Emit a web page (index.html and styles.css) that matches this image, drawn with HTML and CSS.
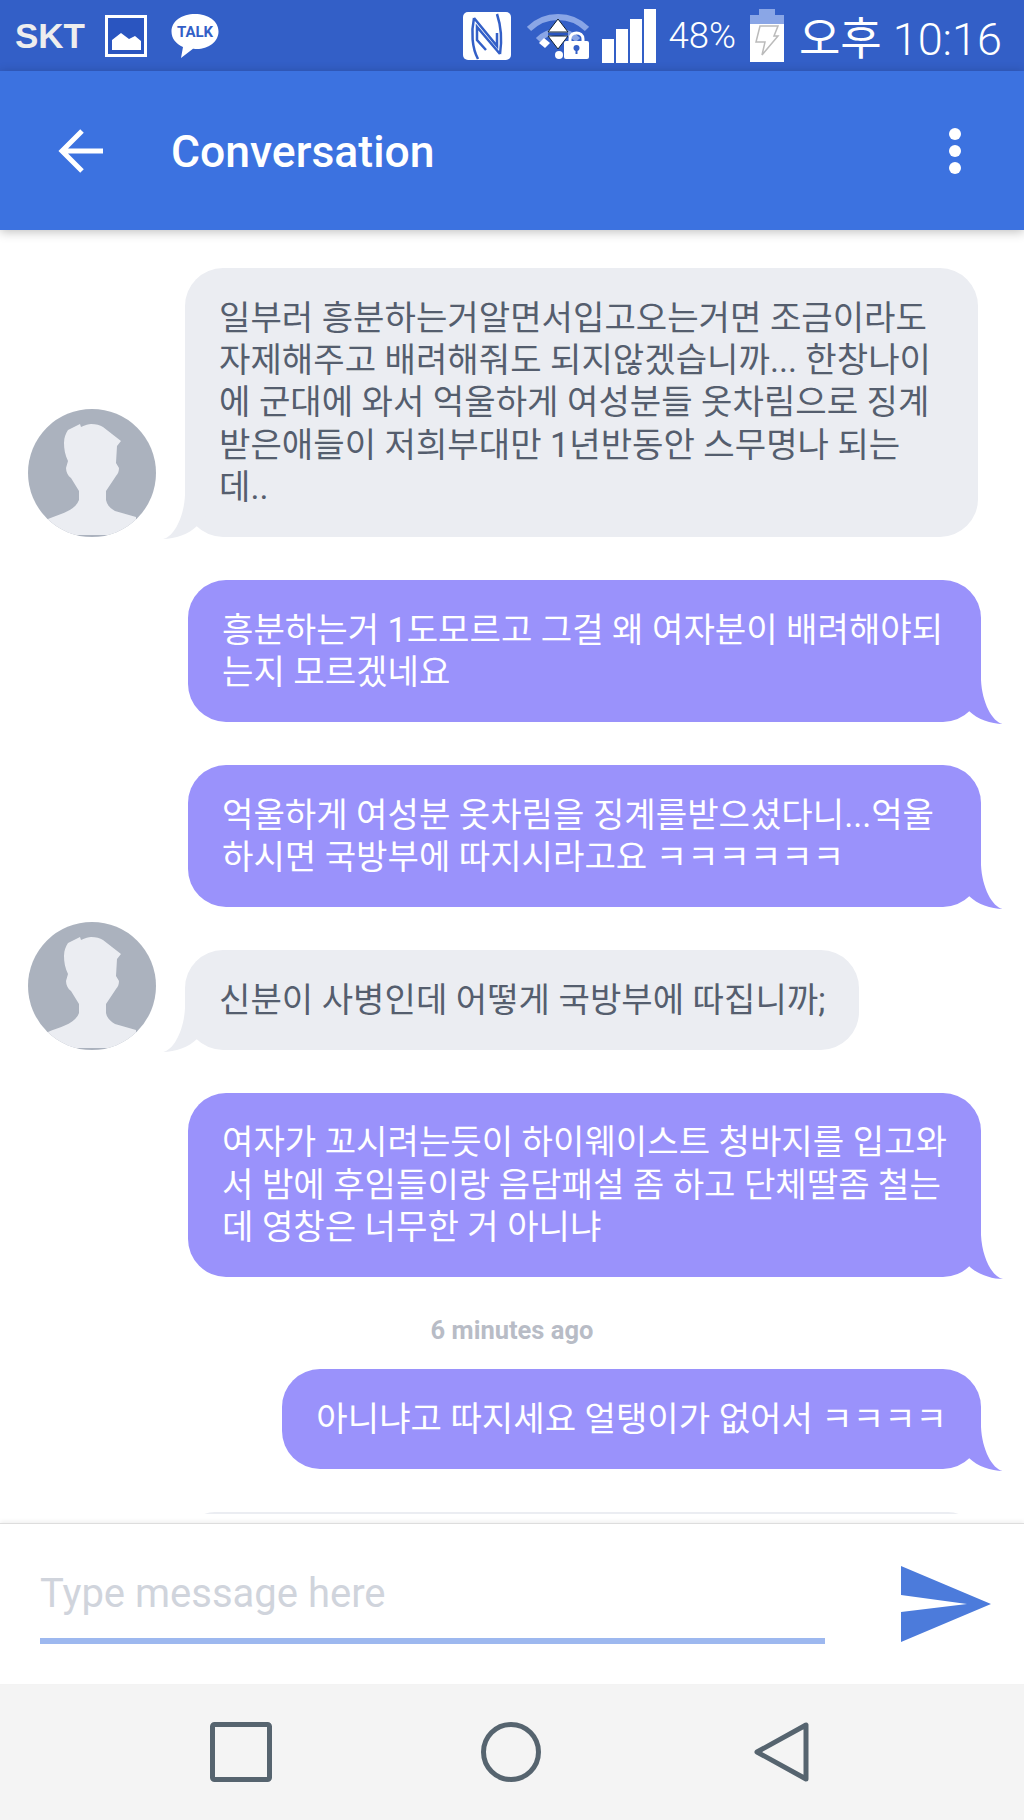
FILE: index.html
```html
<!DOCTYPE html>
<html lang="ko">
<head>
    <meta charset="utf-8">
    <title>Conversation</title>
    <link rel="stylesheet" href="styles.css">
</head>
<body>
    <div class="status">
        <span class="carrier">SKT</span>
        <svg class="ic-photo" width="42" height="42" viewBox="0 0 42 42"><path fill="#fff" d="M0 0h42v42H0z"/><path fill="#2a55c0" d="M3 3h36v36H3z"/><path fill="#fff" d="M7 35V25l9-7 8 6 6-3 6 5v9z"/></svg>
        <svg class="ic-talk" width="48" height="44" viewBox="0 0 48 44"><path fill="#fff" d="M24 0c13 0 23.500 7 23.500 17.500S37 35 26 35c-1 0-3 0-4-.200L10 44l2-11C5 30 .5 24.500.5 17.500.5 7 11 0 24 0z"/><text class="talk-text" x="24" y="23" text-anchor="middle">TALK</text></svg>
        <span class="status-fill"></span>
        <svg class="ic-nfc" width="48" height="48" viewBox="0 0 48 48"><rect width="48" height="48" rx="5" fill="#fff"/><path fill="none" stroke="#335fc7" stroke-width="2.500" d="M11 6C8 20 9 36 15 47M11 6l23 28V21M37 42c2-13 1-28-3-40M37 42L14 15v13l9 10"/></svg>
        <svg class="ic-wifi" width="62" height="47" viewBox="0 0 62 47"><path fill="none" stroke="#8aa6e6" stroke-width="6" d="M2 17C18 1 44 1 60 17M11 28c11-11 29-11 40 0"/><path fill="#fff" stroke="#123" stroke-width="1" d="M31 7l10 13H21zM21 24h20L31 37z"/><path fill="#2a55c0" d="M21 21h20v2H21z"/><circle cx="32" cy="43" r="4" fill="#fff"/><path fill="#fff" d="M17 26l6 5-5 5-6-5z"/><rect x="37" y="29" width="25" height="18" rx="2" fill="#fff"/><path fill="none" stroke="#fff" stroke-width="3" d="M43 30v-3c0-8 13-8 13 0v3"/><circle cx="49.500" cy="36" r="3" fill="#335fc7"/><path fill="#335fc7" d="M48.500 36h2v6h-2z"/></svg>
        <svg class="ic-signal" width="54" height="54" viewBox="0 0 54 54"><path fill="#fff" d="M0 30h12v24H0zM14 20h12v34H14zM28 10h12v44H28zM42 0h12v54H42z"/></svg>
        <span class="pct">48%</span>
        <svg class="ic-batt" width="34" height="53" viewBox="0 0 34 53"><path fill="#8aa6e6" d="M9 0h16v6h9v9H0V6h9z"/><path fill="#fff" d="M0 15h34v38H0z"/><path fill="#fff" stroke="#bbb" stroke-width="1.500" d="M10 17h18l-4 10h4L12 46l3-13H6z"/></svg>
        <span class="clock"><span class="ampm">오후</span> 10:16</span>
    </div>

    <div class="appbar">
        <svg class="back" width="46" height="46" viewBox="0 0 46 46"><path fill="none" stroke="#fff" stroke-width="5" d="M46 23H5M25 3L5 23l20 20"/></svg>
        <span class="title">Conversation</span>
        <div class="more"><i></i><i></i><i></i></div>
    </div>

    <div class="messages">
        <div class="row in">
            <svg class="avatar" width="128" height="128" viewBox="0 0 128 128"><use href="#person"/></svg>
            <div class="bubble in-bubble wide">
                일부러 흥분하는거알면서입고오는거면 조금이라도<br>자제해주고 배려해줘도 되지않겠습니까... 한창나이<br>에 군대에 와서 억울하게 여성분들 옷차림으로 징계<br>받은애들이 저희부대만 1년반동안 스무명나 되는<br>데..
                <svg class="tail tail-in" width="44" height="44" viewBox="0 0 44 44"><path d="M22 0C21 22 11 42 0 44c12 0 26-5 34-13l10-11V0z"/></svg>
            </div>
        </div>

        <div class="row out">
            <div class="bubble out-bubble wide">
                흥분하는거 1도모르고 그걸 왜 여자분이 배려해야되<br>는지 모르겠네요
                <svg class="tail tail-out" width="44" height="44" viewBox="0 0 44 44"><path d="M22 0c1 22 11 42 22 44-12 0-26-5-34-13L0 20V0z"/></svg>
            </div>
        </div>

        <div class="row out">
            <div class="bubble out-bubble wide">
                억울하게 여성분 옷차림을 징계를받으셨다니...억울<br>하시면 국방부에 따지시라고요 ㅋㅋㅋㅋㅋㅋ
                <svg class="tail tail-out" width="44" height="44" viewBox="0 0 44 44"><path d="M22 0c1 22 11 42 22 44-12 0-26-5-34-13L0 20V0z"/></svg>
            </div>
        </div>

        <div class="row in">
            <svg class="avatar" width="128" height="128" viewBox="0 0 128 128"><use href="#person"/></svg>
            <div class="bubble in-bubble">
                신분이 사병인데 어떻게 국방부에 따집니까;
                <svg class="tail tail-in" width="44" height="44" viewBox="0 0 44 44"><path d="M22 0C21 22 11 42 0 44c12 0 26-5 34-13l10-11V0z"/></svg>
            </div>
        </div>

        <div class="row out">
            <div class="bubble out-bubble wide">
                여자가 꼬시려는듯이 하이웨이스트 청바지를 입고와<br>서 밤에 후임들이랑 음담패설 좀 하고 단체딸좀 철는<br>데 영창은 너무한 거 아니냐
                <svg class="tail tail-out" width="44" height="44" viewBox="0 0 44 44"><path d="M22 0c1 22 11 42 22 44-12 0-26-5-34-13L0 20V0z"/></svg>
            </div>
        </div>

        <div class="stamp">6 minutes ago</div>

        <div class="row out">
            <div class="bubble out-bubble">
                아니냐고 따지세요 얼탱이가 없어서 ㅋㅋㅋㅋ
                <svg class="tail tail-out" width="44" height="44" viewBox="0 0 44 44"><path d="M22 0c1 22 11 42 22 44-12 0-26-5-34-13L0 20V0z"/></svg>
            </div>
        </div>

        <div class="row in">
            <div class="bubble in-bubble cut"></div>
        </div>
    </div>

    <div class="composer">
        <div class="field">Type message here</div>
        <svg class="send" width="90" height="76" viewBox="0 0 90 76"><path fill="#4c7bdb" d="M0 0l90 38L0 76V46l66-8-66-9z"/></svg>
    </div>

    <div class="navbar">
        <svg width="62" height="60" viewBox="0 0 62 60"><rect x="2.500" y="2.500" width="57" height="55" rx="2" fill="none" stroke="#56646f" stroke-width="5"/></svg>
        <svg width="60" height="60" viewBox="0 0 60 60"><circle cx="30" cy="30" r="27.500" fill="none" stroke="#56646f" stroke-width="5"/></svg>
        <svg class="nav-back" width="55" height="60" viewBox="0 0 55 60"><path fill="none" stroke="#56646f" stroke-width="5" stroke-linejoin="round" d="M52 3v54L3 30z"/></svg>
    </div>

    <svg class="defs" width="0" height="0">
        <clipPath id="disc"><circle cx="64" cy="64" r="64"/></clipPath>
        <symbol id="person" viewBox="0 0 128 128">
            <g clip-path="url(#disc)">
                <path fill="#abb2be" d="M0 0h128v128H0z"/>
                <path fill="#ebedf2" d="M20 110c12-5 27-8 31-19v-9l-8-13c-3-2-5-6-5-10l2-7c-3-6-4-12-4-18 0-6 2-10 4-13l12-6 1 3c4-2 8-3 10-3 5 0 9 1 12 3l18 14-4 5-1 17 3 5c0 3-1 6-3 8l-10 15v9c1 5 4 8 9 11l21 6v18H20z"/>
            </g>
        </symbol>
    </svg>
</body>
</html>
```

FILE: styles.css
```css
* {
    margin: 0;
    padding: 0;
    box-sizing: border-box;
}
body {
    width: 1024px;
    height: 1820px;
    overflow: hidden;
    display: flex;
    flex-direction: column;
    background: #fff;
    font-family: Roboto, "Noto Sans CJK KR", sans-serif;
}
.defs {
    position: absolute;
}

.status {
    height: 71px;
    flex: none;
    display: flex;
    align-items: center;
    padding: 0 22px 0 15px;
    background: #335fc7;
    color: #fff;
}
.carrier {
    font-family: "Liberation Sans", sans-serif;
    font-weight: bold;
    font-size: 35px;
    color: #eee;
}
.ic-photo {
    margin-left: 20px;
}
.ic-talk {
    margin-left: 24px;
}
.talk-text {
    font-family: Roboto, sans-serif;
    font-weight: bold;
    font-size: 15px;
    fill: #335fc7;
}
.status-fill {
    flex: 1;
}
.ic-nfc {
    margin-right: 16px;
}
.ic-wifi {
    margin-right: 13px;
}
.ic-signal {
    margin-right: 12px;
}
.pct {
    font-size: 36.500px;
    font-weight: 300;
    margin-right: 14px;
}
.ic-batt {
    margin-right: 15px;
}
.clock {
    font-size: 45px;
    font-weight: 300;
    white-space: nowrap;
}
.ampm {
    font-weight: 400;
}

.appbar {
    height: 159px;
    flex: none;
    display: flex;
    align-items: center;
    padding: 0 63px 0 57px;
    background: #3c72e0;
    color: #fff;
    box-shadow: 0 2px 10px rgba(0, 0, 0, .25);
    position: relative;
}
.title {
    margin: 3px 0 0 68px;
    font-size: 44.500px;
    font-weight: 500;
    flex: 1;
}
.more i {
    display: block;
    width: 12px;
    height: 12px;
    margin: 5px 0;
    border-radius: 50%;
    background: #fff;
}

.messages {
    height: 1284px;
    margin-bottom: 9px;
    flex: none;
    overflow: hidden;
    padding-top: 38px;
    display: flex;
    flex-direction: column;
    gap: 43px;
}
.row {
    display: flex;
    align-items: flex-end;
    flex: none;
}
.row.in {
    padding-left: 28px;
}
.row.out {
    justify-content: flex-end;
    padding-right: 43px;
}
.avatar {
    margin: -100px 29px 0 0;
    flex: none;
}
.bubble {
    position: relative;
    padding: 28.600px 34px;
    border-radius: 38px;
    font-size: 34.150px;
    line-height: 42.400px;
    white-space: nowrap;
}
.in-bubble {
    background: #ebedf2;
    color: #555e6e;
}
.out-bubble {
    background: #9a92fb;
    color: #fff;
}
.wide {
    width: 793px;
}
.tail {
    position: absolute;
    bottom: -2px;
}
.tail-in {
    left: -22px;
    fill: #ebedf2;
}
.tail-out {
    right: -22px;
    fill: #9a92fb;
}
.stamp {
    margin: -4px 0 -18px;
    height: 28px;
    line-height: 28px;
    text-align: center;
    font-size: 25.500px;
    font-weight: 700;
    color: #b8bcc6;
    flex: none;
}
.cut {
    margin-left: 157px;
    width: 793px;
    height: 60px;
}

.composer {
    height: 161px;
    flex: none;
    display: flex;
    align-items: flex-start;
    padding: 0 33px 0 40px;
    border-top: 1px solid #ddd;
    background: #fff;
    box-shadow: 0 -2px 4px rgba(0, 0, 0, .06);
    position: relative;
}
.field {
    width: 785px;
    height: 120px;
    margin-right: 76px;
    padding-top: 46px;
    border-bottom: 6px solid #9db8ef;
    font-size: 40px;
    color: #d0d4dc;
}
.send {
    margin-top: 42px;
}

.navbar {
    flex: 1;
    display: flex;
    align-items: center;
    gap: 209px;
    padding-left: 210px;
    background: #f4f4f4;
}
.nav-back {
    margin-left: 4px;
}
```
